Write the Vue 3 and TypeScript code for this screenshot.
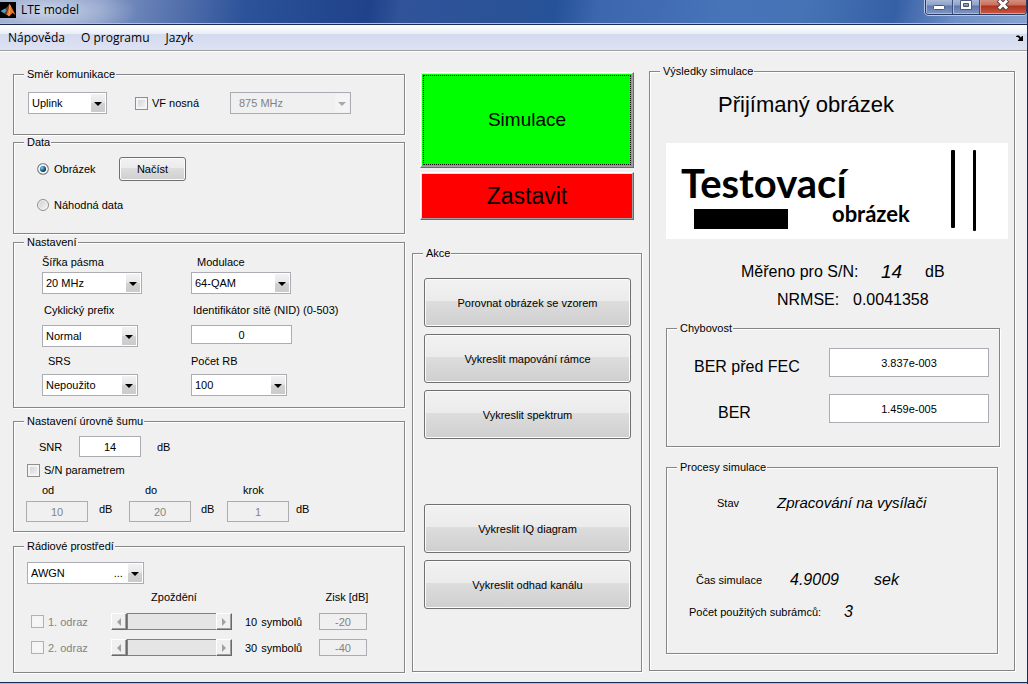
<script setup lang="ts">
import { ref } from 'vue'

interface Reflection {
  id: string
  label: string
  delay: number
  gain: string
}

const menus: string[] = ['Nápověda', 'O programu', 'Jazyk']
const direction = ref('Uplink')
const source = ref('image')
const bandwidth = ref('20 MHz')
const modulation = ref('64-QAM')
const prefix = ref('Normal')
const nid = ref('0')
const srs = ref('Nepoužito')
const rb = ref('100')
const snr = ref('14')
const channel = ref('AWGN')
const carrier = ref(false)
const sweep = ref(false)
const berBefore = ref('3.837e-003')
const ber = ref('1.459e-005')

const range = [
  { id: 'from', label: 'od', value: '10' },
  { id: 'to', label: 'do', value: '20' },
  { id: 'step', label: 'krok', value: '1' },
]

const reflections: Reflection[] = [
  { id: 'r1', label: '1. odraz', delay: 10, gain: '-20' },
  { id: 'r2', label: '2. odraz', delay: 30, gain: '-40' },
]

const plotActions: string[] = ['Porovnat obrázek se vzorem', 'Vykreslit mapování rámce', 'Vykreslit spektrum']
const channelActions: string[] = ['Vykreslit IQ diagram', 'Vykreslit odhad kanálu']
const channelText = 'AWGN' + '\u00a0'.repeat(16) + '...'
</script>

<template>
  <div class="window">
    <header class="titlebar">
      <svg class="logo" viewBox="0 0 16 16" aria-hidden="true">
        <rect width="16" height="16" fill="#000" />
        <path d="M0.500 9L5 6.500L7 8L4.500 11.500Z" fill="#4d9fc4" />
        <path d="M5 6.500Q7.500 5.500 9.500 1.500L8.500 8L6 12.500L4.500 11.500L7 8Z" fill="#7a3a28" />
        <path d="M9.500 1.500Q11.500 5 15.500 13L12.500 11L9 14.500Q7.500 13 6 12.500Q8.500 9 9.500 1.500Z" fill="#e0742a" />
        <path d="M9.500 2Q10 8 8.500 13L9 14.500Q10.500 10 10.500 4Z" fill="#f6b45c" />
      </svg>
      <h1 class="title">LTE model</h1>
      <div class="window-buttons">
        <button class="wb" type="button" aria-label="Minimalizovat">
          <svg width="14" height="12" viewBox="0 0 14 12"><rect x="1.500" y="5.500" width="11" height="4" rx="1" fill="#fff" stroke="#4a5878" /></svg>
        </button>
        <button class="wb" type="button" aria-label="Maximalizovat">
          <svg width="14" height="12" viewBox="0 0 14 12"><path d="M1.500 0.500h11v9h-11zM4.500 3.500v3h5v-3z" fill="#fff" fill-rule="evenodd" stroke="#4a5878" /></svg>
        </button>
        <button class="wb close" type="button" aria-label="Zavřít">
          <svg width="14" height="12" viewBox="0 0 14 12"><path d="M2.500 0L11.500 9M11.500 0L2.500 9" stroke="#5a3c44" stroke-width="5" /><path d="M3 0.500L11 8.500M11 0.500L3 8.500" stroke="#fff" stroke-width="3" /></svg>
        </button>
      </div>
    </header>

    <nav class="menubar">
      <button v-for="m in menus" :key="m" type="button" class="menu">{{ m }}</button>
      <svg class="dock" width="7" height="6" viewBox="0 0 7 6" aria-hidden="true">
        <path d="M0 1.500L1 0.500H3L5 2.500L6 1H7V6H2V5L3.500 4L2 2H0Z" fill="#000" />
      </svg>
    </nav>

    <main class="body">
      <div class="settings">
        <fieldset class="panel">
          <legend>Směr komunikace</legend>
          <div class="direction">
            <span class="combo"><select v-model="direction" aria-label="Směr komunikace"><option>Uplink</option><option>Downlink</option></select></span>
            <label class="tick"><input v-model="carrier" type="checkbox" />VF nosná</label>
            <span class="combo off"><select disabled aria-label="Nosný kmitočet"><option>875 MHz</option></select></span>
          </div>
        </fieldset>

        <fieldset class="panel data-panel">
          <legend>Data</legend>
          <div class="data">
            <label class="tick"><input v-model="source" type="radio" name="source" value="image" />Obrázek</label>
            <button type="button" class="push">Načíst</button>
            <label class="tick"><input v-model="source" type="radio" name="source" value="random" />Náhodná data</label>
          </div>
        </fieldset>

        <fieldset class="panel setup-panel">
          <legend>Nastavení</legend>
          <div class="setup">
            <label for="bw">Šířka pásma</label>
            <label for="mod" class="indent">Modulace</label>
            <span class="combo w100"><select id="bw" v-model="bandwidth"><option>20 MHz</option><option>10 MHz</option></select></span>
            <span class="combo w100"><select id="mod" v-model="modulation"><option>64-QAM</option><option>16-QAM</option></select></span>
            <label for="cp" class="near">Cyklický prefix</label>
            <label for="nid" class="near">Identifikátor sítě (NID) (0-503)</label>
            <span class="combo w96"><select id="cp" v-model="prefix"><option>Normal</option><option>Extended</option></select></span>
            <input id="nid" v-model="nid" class="box nid" type="text" />
            <label for="srs" class="indent">SRS</label>
            <label for="rb">Počet RB</label>
            <span class="combo w96"><select id="srs" v-model="srs"><option>Nepoužito</option><option>Použito</option></select></span>
            <span class="combo w96"><select id="rb" v-model="rb"><option>100</option><option>50</option></select></span>
          </div>
        </fieldset>

        <fieldset class="panel noise-panel">
          <legend>Nastavení úrovně šumu</legend>
          <div class="snr">
            <label for="snr">SNR</label>
            <input id="snr" v-model="snr" class="box" type="text" />
            <span class="unit">dB</span>
          </div>
          <label class="tick sweep"><input v-model="sweep" type="checkbox" />S/N parametrem</label>
          <div class="range">
            <label v-for="r in range" :key="r.id" :for="r.id">{{ r.label }}</label>
            <template v-for="r in range" :key="r.id">
              <input :id="r.id" class="box" type="text" :value="r.value" disabled />
              <span>dB</span>
            </template>
          </div>
        </fieldset>

        <fieldset class="panel radio-panel">
          <legend>Rádiové prostředí</legend>
          <div class="channel">
            <span class="combo"><select v-model="channel" aria-label="Rádiové prostředí"><option value="AWGN">{{ channelText }}</option></select></span>
          </div>
          <div class="reflections">
            <span class="head delay-head">Zpoždění</span>
            <span class="head gain-head">Zisk [dB]</span>
            <template v-for="r in reflections" :key="r.id">
              <label class="tick"><input type="checkbox" disabled />{{ r.label }}</label>
              <span class="scroll">
                <button type="button" disabled aria-label="Méně"><i class="left"></i></button>
                <input type="range" min="0" max="100" :value="r.delay" disabled :aria-label="'Zpoždění ' + r.label" />
                <button type="button" disabled aria-label="Více"><i class="right"></i></button>
              </span>
              <span class="symbols"><output>{{ r.delay }}</output><span>symbolů</span></span>
              <input class="box gain" type="text" :value="r.gain" disabled :aria-label="'Zisk ' + r.label" />
            </template>
          </div>
        </fieldset>
      </div>

      <div class="actions">
        <div class="run">
          <button type="button" class="big start"><span>Simulace</span></button>
          <button type="button" class="big stop">Zastavit</button>
        </div>
        <fieldset class="panel">
          <legend>Akce</legend>
          <div class="action-list">
            <button v-for="a in plotActions" :key="a" type="button" class="push">{{ a }}</button>
          </div>
          <div class="action-list second">
            <button v-for="a in channelActions" :key="a" type="button" class="push">{{ a }}</button>
          </div>
        </fieldset>
      </div>

      <div class="results">
        <fieldset class="panel">
          <legend>Výsledky simulace</legend>
          <h2 class="heading">Přijímaný obrázek</h2>
          <svg class="picture" viewBox="0 0 342 96" role="img" aria-label="Testovací obrázek">
            <rect width="342" height="96" fill="#fff" />
            <text x="15" y="55" class="word-big">Testovací</text>
            <text x="166" y="79" class="word-small">obrázek</text>
            <rect x="28" y="66" width="94" height="20" />
            <rect x="285" y="7" width="4" height="78" rx="1" />
            <rect x="307" y="7" width="3" height="81" rx="1" />
          </svg>
          <div class="measure snr-line"><span>Měřeno pro S/N:</span><output class="strong">14</output><span>dB</span></div>
          <div class="measure nrmse-line"><span>NRMSE:</span><output>0.0041358</output></div>

          <fieldset class="panel errors">
            <legend>Chybovost</legend>
            <div class="ber-grid">
              <label for="ber1">BER před FEC</label>
              <input id="ber1" v-model="berBefore" class="box" type="text" />
              <label for="ber2" class="short">BER</label>
              <input id="ber2" v-model="ber" class="box" type="text" />
            </div>
          </fieldset>

          <fieldset class="panel process">
            <legend>Procesy simulace</legend>
            <div class="line state"><span>Stav</span><output class="status">Zpracování na vysílači</output></div>
            <div class="line time"><span>Čas simulace</span><output>4.9009</output><em>sek</em></div>
            <div class="line frames"><span>Počet použitých subrámců:</span><output>3</output></div>
          </fieldset>
        </fieldset>
      </div>
    </main>
  </div>
</template>

<style>
body {
  margin: 0;
  background: #f0f0f0;
}
</style>

<style scoped>
* {
  box-sizing: border-box;
}

.window {
  border-right: 1px solid #1c2c50;
  border-bottom: 1px solid #3d67a8;
  box-shadow: inset 0 -1px 0 #a9c0e4, inset 0 -2px 0 #1c2c50;
  background: #f0f0f0;
  color: #000;
  font: 11px/14px "Liberation Sans", Arial, sans-serif;
}

button,
input,
select {
  margin: 0;
  font: inherit;
  color: inherit;
}

/* title bar */
.titlebar {
  display: flex;
  align-items: flex-start;
  height: 25px;
  border-bottom: 1px solid #1c2c50;
  box-shadow: inset 0 -1px 0 #a9bfe4;
  background:
    radial-gradient(ellipse 90px 26px at 48px 11px, rgba(225, 232, 245, 0.75), rgba(225, 232, 245, 0)),
    linear-gradient(100deg, #8c9cc4 0, #7f94c2 10%, #4a69a8 19%, #2c529a 24%, #254a92 30%, #20428a 36%, #30539a 39%, #2a5297 50%, #26529a 54%, #3c66ae 58%, #4773b9 70%, #4673b6 78%, #3660a6 87%, #6f8fc6 93%, #88a2d0 100%);
}

.logo {
  width: 16px;
  height: 16px;
  margin-top: 2px;
}

.title {
  flex: 1;
  margin: 0;
  padding-left: 5px;
  font: 12px/20px "Open Sans", "Noto Sans", sans-serif;
}

.window-buttons {
  display: flex;
  height: 15px;
  border: 1px solid #2a3a60;
  border-top: 0;
  border-radius: 0 0 4px 4px;
  box-shadow: 0 1px 0 #b8c8e6, -1px 0 0 #b8c8e6;
  overflow: hidden;
}

.wb {
  display: flex;
  justify-content: center;
  width: 27px;
  padding: 0;
  border: 0;
  border-right: 1px solid #3c5080;
  box-shadow: inset 1px 0 0 #aabbdc, inset 0 -1px 0 #aabbdc;
  background: linear-gradient(#a9b9d6 0, #8fa3ca 5px, #5f79ac 6px, #7f97c4 100%);
}

.wb.close {
  width: 46px;
  border-right: 0;
  box-shadow: inset 1px 0 0 #d8988c, inset 0 -1px 0 #e0a090;
  background: linear-gradient(#d48f80 0, #c8705c 5px, #ad3220 6px, #cc5a40 100%);
}

/* menu */
.menubar {
  display: flex;
  align-items: center;
  height: 27px;
  padding: 0 4px 0 0;
  border-bottom: 1px solid #fff;
  box-shadow: inset 0 -1px 0 #a0a0a0;
  background: linear-gradient(#fff 0, #e9edf6 9px, #d3daed 9px, #dee3f4 100%);
}

.menu {
  padding: 0 8px;
  border: 0;
  background: none;
  font: 12px/24px "Open Sans", "Noto Sans", sans-serif;
}

.dock {
  margin-left: auto;
}

/* columns */
.body {
  display: grid;
  grid-template-columns: 392fr 230fr 366fr;
  column-gap: 7px;
  align-items: start;
  padding: 0 12px 11px 13px;
}

.settings {
  padding-top: 16px;
}

.actions {
  padding-top: 20px;
}

.results {
  padding-top: 13px;
}

.panel {
  min-width: 0;
  margin: 0;
  padding: 0;
  border: 1px solid #868686;
  box-shadow: 1px 1px 0 #fff, inset 1px 1px 0 #fff;
}

.panel > legend {
  margin-left: 10px;
  padding: 0 1px 0 3px;
  background: #f0f0f0;
  line-height: 13px;
}

/* controls */
.combo {
  position: relative;
  display: block;
  height: 22px;
}

.combo select {
  display: block;
  width: 100%;
  height: 100%;
  padding: 0 16px 0 3px;
  border: 1px solid #abadb3;
  border-radius: 0;
  appearance: none;
  background: #fff;
  opacity: 1;
}

.combo::before {
  content: "";
  position: absolute;
  top: 2px;
  right: 2px;
  bottom: 2px;
  width: 14px;
  background: linear-gradient(#f2f2f2 0, #e6e6e6 50%, #d2d2d2 50%, #cbcbcb 100%);
  pointer-events: none;
}

.combo::after {
  content: "";
  position: absolute;
  top: 10px;
  right: 5px;
  border: 4px solid transparent;
  border-top-color: #000;
  border-bottom: 0;
  pointer-events: none;
}

.combo.off select {
  padding-left: 8px;
  background: #f0f0f0;
  color: #838383;
}

.combo.off::before {
  background: #f4f4f4;
}

.combo.off::after {
  border-top-color: #a8a8a8;
}

.box {
  display: block;
  width: 62px;
  height: 21px;
  padding: 0;
  border: 1px solid #abadb3;
  border-radius: 0;
  background: #fff;
  text-align: center;
}

.box:disabled {
  background: #f0f0f0;
  color: #838383;
}

.tick {
  display: flex;
  align-items: center;
  gap: 4px;
  white-space: nowrap;
}

.tick input {
  flex: none;
  width: 13px;
  height: 13px;
  border: 1px solid #8e8f8f;
  appearance: none;
  background: linear-gradient(135deg, #cbcfd5, #f6f6f6);
  box-shadow: inset 0 0 0 2px #f4f4f4;
}

.tick input[type="radio"] {
  width: 12px;
  height: 12px;
  border-radius: 50%;
  box-shadow: inset 0 0 0 1px #f4f4f4;
}

.tick input[type="radio"]:checked {
  background: radial-gradient(circle at 4px 4px, #8fd8f4 0, #2a7aa8 2px, #0c2f52 4px);
  box-shadow: inset 0 0 0 2px #f4f4f4;
}

.tick input[type="checkbox"]:checked {
  background: #2a5a8c;
}

.tick input:disabled {
  border-color: #b1b1b1;
  background: #f6f6f6;
}

.tick:has(input:disabled) {
  color: #838383;
}

.push {
  padding: 0;
  border: 1px solid #707070;
  border-radius: 3px;
  box-shadow: inset 0 0 0 1px #fbfbfb;
  background: linear-gradient(#f2f2f2 0, #ebebeb 47%, #dddddd 47%, #cfcfcf 100%);
}

/* left column */
.direction {
  display: grid;
  grid-template-columns: 79px 67px 121px;
  align-items: center;
  gap: 28px;
  padding: 11px 14px 20px;
}

.data-panel {
  margin-top: 1px;
}

.data {
  display: grid;
  grid-template-columns: 82px 67px;
  grid-auto-rows: 24px;
  row-gap: 12px;
  padding: 8px 23px 16px;
}

.data .tick {
  gap: 5px;
}

.setup-panel {
  margin-top: 2px;
}

.setup {
  display: grid;
  grid-template-columns: 149px 1fr;
  grid-template-rows: 21px 22px 31px 22px 27px 22px;
  align-items: center;
  padding: 2px 28px 11px;
}

.near {
  padding-left: 2px;
}

.indent {
  padding-left: 6px;
}

.w100 {
  width: 100px;
}

.w96 {
  width: 96px;
}

.nid {
  align-self: start;
  width: 101px;
  height: 19px;
}

.noise-panel {
  margin-top: 7px;
}

.snr {
  display: grid;
  grid-template-columns: 40px 62px auto;
  align-items: center;
  padding: 8px 25px 0;
}

.unit {
  padding-left: 16px;
}

.sweep {
  padding: 7px 13px 0;
  line-height: 13px;
}

.range {
  display: grid;
  grid-template-columns: 73px 30px 72px 26px 69px 1fr;
  grid-template-rows: 24px 21px;
  padding: 0 12px 9px;
}

.range label {
  grid-column: span 2;
  padding-left: 16px;
  line-height: 26px;
}

.range span {
  line-height: 17px;
}

.radio-panel {
  margin-top: 8px;
}

.channel {
  width: 143px;
  padding: 9px 13px 0;
}

.channel .combo {
  width: 117px;
}

.reflections {
  display: grid;
  grid-template-columns: 72px 126px 66px 56px;
  grid-template-rows: 20px 17px 17px;
  gap: 9px 8px;
  align-items: center;
  padding: 0 0 16px 17px;
}

.head {
  align-self: end;
  text-align: center;
}

.delay-head {
  grid-column: 2;
}

.gain-head {
  grid-column: 4;
}

.scroll {
  display: flex;
  width: 121px;
  height: 17px;
}

.scroll button {
  display: flex;
  align-items: center;
  justify-content: center;
  width: 16px;
  padding: 0;
  border: 1px solid;
  border-color: #fff #696969 #696969 #fff;
  box-shadow: inset -1px -1px 0 #a0a0a0;
  background: #f0f0f0;
}

.scroll i {
  border: 4px solid transparent;
}

.scroll .left {
  border-left: 0;
  border-right-color: #a0a0a0;
}

.scroll .right {
  border-right: 0;
  border-left-color: #a0a0a0;
}

.scroll input {
  flex: 1;
  min-width: 0;
  height: 17px;
  border: 1px solid #808080;
  border-right: 0;
  appearance: none;
  background: #e5e5e5;
}

.scroll input::-webkit-slider-thumb {
  appearance: none;
  width: 0;
  height: 0;
}

.symbols {
  display: flex;
  gap: 4px;
}

.gain {
  width: 48px;
  height: 17px;
}

/* middle column */
.run {
  display: grid;
  gap: 4px;
  padding: 0 8px;
}

.big {
  padding: 0;
  border: 1px solid;
  border-color: #fff #696969 #696969 #fff;
  box-shadow: inset -1px -1px 0 #a0a0a0, inset 1px 1px 0 #e3e3e3;
}

.start {
  height: 96px;
  padding: 2px;
  background: #00ff00;
  font-size: 19px;
}

.start span {
  display: grid;
  place-items: center;
  height: 100%;
  border: 1px dotted #000;
}

.stop {
  height: 48px;
  background: #ff0000;
  font-size: 23px;
}

.actions .panel {
  margin-top: 27px;
}

.action-list {
  display: grid;
  grid-auto-rows: 49px;
  gap: 7px;
  padding: 18px 10px 0 11px;
}

.action-list.second {
  padding-top: 65px;
  padding-bottom: 62px;
}

/* right column */
.heading {
  margin: 0;
  padding: 14px 0 25px 68px;
  font-size: 22px;
  font-weight: 400;
  line-height: 26px;
}

.picture {
  display: block;
  width: calc(100% - 22px);
  margin: 0 6px 19px 16px;
}

.word-big {
  font: 700 40px Lato, sans-serif;
}

.word-small {
  font: 700 22px Lato, sans-serif;
}

.measure {
  display: grid;
  align-items: center;
  height: 28px;
  font-size: 16px;
  white-space: nowrap;
}

.snr-line {
  grid-template-columns: 140px 44px auto;
  padding-left: 91px;
}

.nrmse-line {
  grid-template-columns: 76px auto;
  padding-left: 127px;
}

.strong {
  font-size: 19px;
  font-style: italic;
}

.errors {
  margin: 8px 14px 0 16px;
}

.ber-grid {
  display: grid;
  grid-template-columns: 162px 1fr;
  row-gap: 17px;
  padding: 13px 10px 23px 0;
}

.ber-grid label {
  align-self: end;
  padding-left: 27px;
  font-size: 16px;
  line-height: 20px;
}

.ber-grid .short {
  padding-left: 51px;
}

.ber-grid .box {
  width: 100%;
  height: 29px;
}

.process {
  margin: 14px 16px 16px;
}

.line {
  display: grid;
  align-items: center;
  height: 20px;
  white-space: nowrap;
}

.line output,
.line em {
  font-size: 16px;
  font-style: italic;
}

.line .status {
  font-size: 15px;
}

.state {
  grid-template-columns: 60px auto;
  margin-top: 19px;
  padding-left: 50px;
}

.time {
  grid-template-columns: 94px 84px auto;
  margin-top: 57px;
  padding-left: 29px;
}

.frames {
  grid-template-columns: 155px auto;
  margin: 12px 0 31px;
  padding-left: 22px;
}
</style>
